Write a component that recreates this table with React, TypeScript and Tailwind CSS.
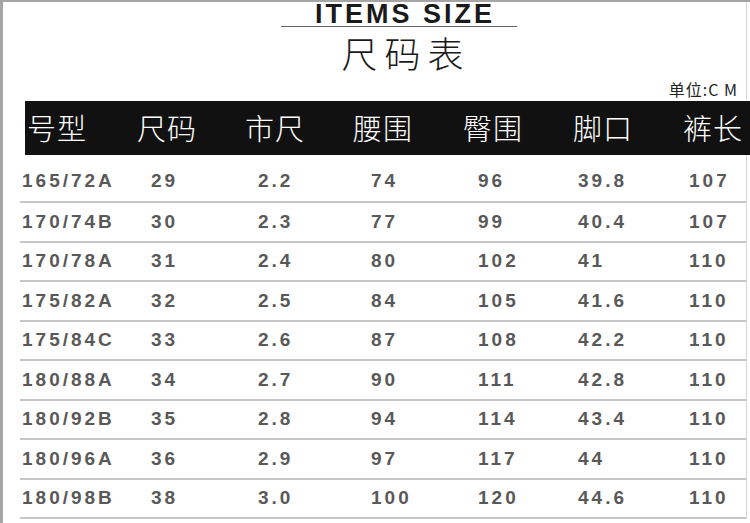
const headers = ["号型", "尺码", "市尺", "腰围", "臀围", "脚口", "裤长"];

const rows = [
  ["165/72A", "29", "2.2", "74", "96", "39.8", "107"],
  ["170/74B", "30", "2.3", "77", "99", "40.4", "107"],
  ["170/78A", "31", "2.4", "80", "102", "41", "110"],
  ["175/82A", "32", "2.5", "84", "105", "41.6", "110"],
  ["175/84C", "33", "2.6", "87", "108", "42.2", "110"],
  ["180/88A", "34", "2.7", "90", "111", "42.8", "110"],
  ["180/92B", "35", "2.8", "94", "114", "43.4", "110"],
  ["180/96A", "36", "2.9", "97", "117", "44", "110"],
  ["180/98B", "38", "3.0", "100", "120", "44.6", "110"],
];

const cjk = "font-['Noto_Sans_CJK_SC',sans-serif]";

export default function App() {
  return (
    <div className="w-[750px] h-[523px] overflow-hidden bg-white border-l-[3px] border-t-2 border-[#a5a5a5] font-['Liberation_Sans',Arial,sans-serif]">
      {/* title */}
      <div className="border-r border-[#d6d6d6] mr-[3px] h-[97px]">
        <div className="ml-[278px] w-[236px] flex flex-col items-center">
          <div className="text-[27px] leading-[24px] font-bold tracking-[3px] text-[#1a1a1a] pl-[12px]">ITEMS SIZE</div>
          <div className="w-full h-px bg-[#666]" />
          <div className={`${cjk} text-[36px] leading-[36px] font-light tracking-[7px] text-[#1a1a1a] mt-[7px] pl-[14px]`}>尺码表</div>
        </div>
        <div className={`${cjk} mt-[11px] text-[16px] leading-[16px] text-[#222] text-right pr-[8px] tracking-[1px]`}>单位:C M</div>
      </div>

      {/* header bar */}
      <div className={`${cjk} ml-[22px] mt-[2px] h-[54px] bg-[#111] text-white text-[29px] font-light grid grid-cols-[110px_108px_108px_110px_110px_110px_1fr] items-center pl-[2px]`}>
        {headers.map((h) => (
          <div key={h} className="tracking-[1px]">{h}</div>
        ))}
      </div>

      {/* rows */}
      <div className="border-r border-[#d6d6d6] mr-[3px] pl-[17px]">
        {rows.map((r, i) => (
          <div
            key={r[0]}
            className={`grid grid-cols-[129px_107px_113px_107px_100px_111px_1fr] items-center border-b-2 border-[#c6c6c6] text-[19px] font-bold tracking-[3px] text-[#595959] ${i === 0 ? "h-[48px] pt-[6px]" : "h-[39.5px]"}`}
          >
            {r.map((c, j) => (
              <div key={j} className="pl-[2px]">{c}</div>
            ))}
          </div>
        ))}
      </div>
    </div>
  );
}
